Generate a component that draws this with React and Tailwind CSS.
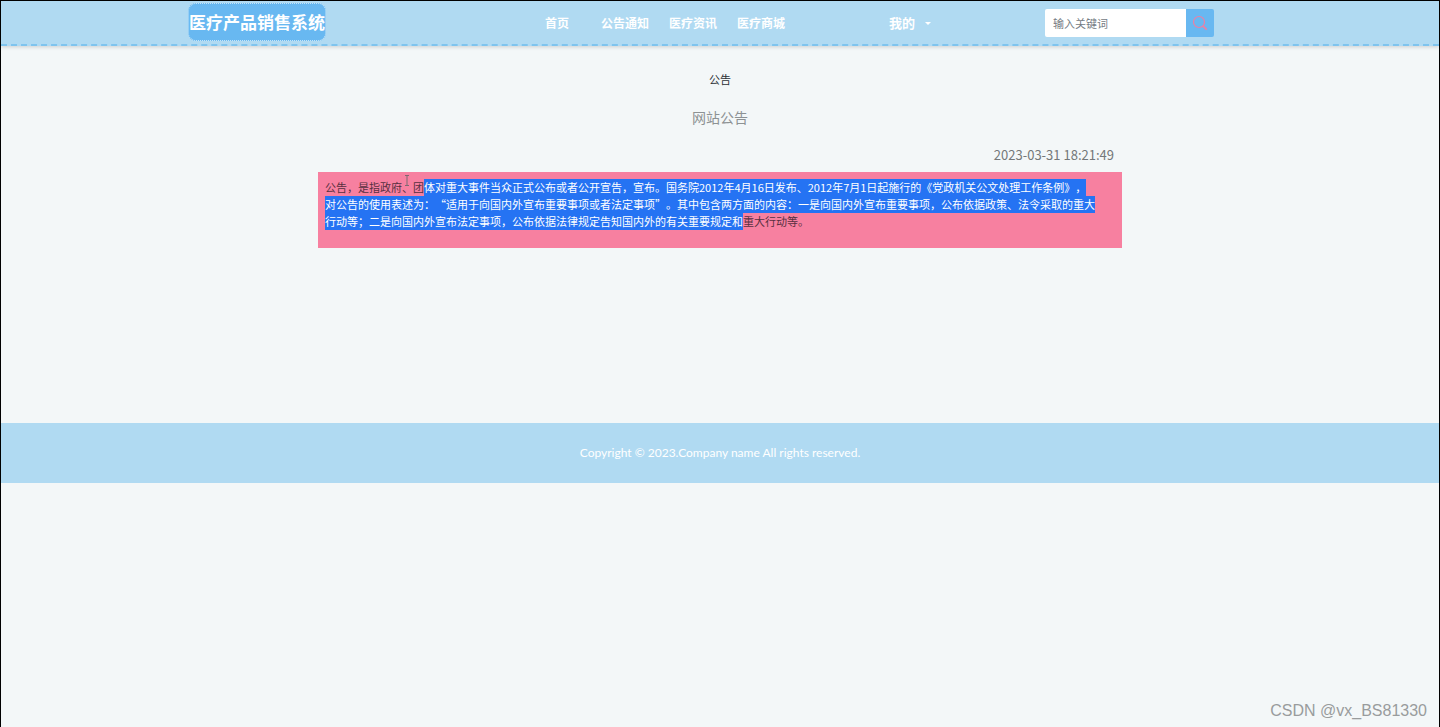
import React, { useState } from "react";

const links = [
  { label: "公告通知", href: "#notice" },
  { label: "医疗资讯", href: "#news" },
  { label: "医疗商城", href: "#mall" },
];

function SearchIcon() {
  return (
    <svg width="16" height="16" viewBox="0 0 16 16" fill="none" stroke="#ee7fa3" aria-hidden="true">
      <circle cx="7" cy="7" r="5.5" strokeWidth="1.2" />
      <path d="M10.8 10.8l3.9 3.9" strokeWidth="1.8" />
    </svg>
  );
}

function Header() {
  const [keyword, setKeyword] = useState("");

  return (
    <header className="h-[45px] bg-[#b0daf2] border-b-2 border-dashed border-[#7fc4ee] shadow-[0_1px_4px_rgba(0,0,0,0.16)]">
      <div className="max-w-[1064px] h-full mx-auto pt-px grid grid-cols-[357fr_344fr_156fr_207fr] items-center text-white font-bold">
        {/* Logo */}
        <a
          href="#home"
          className="justify-self-start self-start h-[38px] mt-px bg-[#68b8f1] border border-dotted border-[#c3e4f8] rounded-lg text-[17px] flex items-center whitespace-nowrap"
        >
          医疗产品销售系统
        </a>

        {/* Menu */}
        <nav className="flex items-center text-xs whitespace-nowrap">
          <a href="#home" className="mr-8">首页</a>
          <div className="flex gap-5">
            {links.map((l) => (
              <a key={l.label} href={l.href}>{l.label}</a>
            ))}
          </div>
        </nav>

        <button type="button" className="flex items-center gap-2.5 text-[13px] font-bold whitespace-nowrap">
          我的
          <span className="border-x-3 border-t-3 border-x-transparent border-t-white" />
        </button>

        {/* Search */}
        <form className="flex h-7 font-normal" onSubmit={(e) => e.preventDefault()}>
          <input
            type="text"
            aria-label="输入关键词"
            placeholder="输入关键词"
            value={keyword}
            onChange={(e) => setKeyword(e.target.value)}
            className="w-[141px] px-2 bg-white rounded-l-xs text-[11px] text-gray-700 placeholder-[#747b83] outline-none"
          />
          <button type="submit" aria-label="搜索" className="w-7 bg-[#68b8f1] rounded-r-xs flex items-center justify-center">
            <SearchIcon />
          </button>
        </form>
      </div>
    </header>
  );
}

function Selected({ children }) {
  return <mark className="inline-block bg-[#2573f3] text-white">{children}</mark>;
}

export default function App() {
  return (
    <div className="relative min-h-screen bg-[#f3f7f8] border border-b-0 border-black font-['Noto_Sans_CJK_SC',sans-serif]">
      <Header />

      <main className="max-w-[804px] min-h-[377px] mx-auto pt-[23px] text-center">
        <h1 className="text-[11px] leading-5 text-[#2b3035]">公告</h1>
        <h2 className="mt-4 text-sm leading-6 text-[#8d9294]">网站公告</h2>
        <p className="mt-4 pr-2 text-right text-[13px] leading-5 text-[#747879]">
          <time dateTime="2023-03-31T18:21:49">2023-03-31 18:21:49</time>
        </p>

        <article
          lang="zh-CN"
          className="relative mt-[7px] px-[7px] pt-[7px] pb-[18px] bg-[#f780a0] text-left text-[11px] leading-[17px] text-[#573040] [text-spacing-trim:space-all]"
        >
          <p>
            公告，是指政府、团
            <Selected>
              体对重大事件当众正式公布或者公开宣告，宣布。国务院2012年4月16日发布、2012年7月1日起施行的《党政机关公文处理工作条例》，
            </Selected>
            <br />
            <Selected>
              对公告的使用表述为：“适用于向国内外宣布重要事项或者法定事项”。其中包含两方面的内容：一是向国内外宣布重要事项，公布依据政策、法令采取的重大
            </Selected>
            <br />
            <Selected>
              行动等；二是向国内外宣布法定事项，公布依据法律规定告知国内外的有关重要规定和
            </Selected>
            重大行动等。
          </p>
          {/* text cursor */}
          <svg
            className="absolute left-[86px] top-[3px]"
            width="6"
            height="11"
            viewBox="0 0 6 11"
            fill="none"
            stroke="#7d6a72"
            aria-hidden="true"
          >
            <path d="M1 .5h4M3 .5v10M1 10.5h4" />
          </svg>
        </article>
      </main>

      <footer className="h-[60px] bg-[#b0daf2] flex items-center justify-center text-xs text-white font-['Lato',sans-serif]">
        Copyright © 2023.Company name All rights reserved.
      </footer>

      <div className="absolute right-3 bottom-1 text-base leading-6 text-[#999c9d] font-['Liberation_Sans',sans-serif]">
        CSDN @vx_BS81330
      </div>
    </div>
  );
}
